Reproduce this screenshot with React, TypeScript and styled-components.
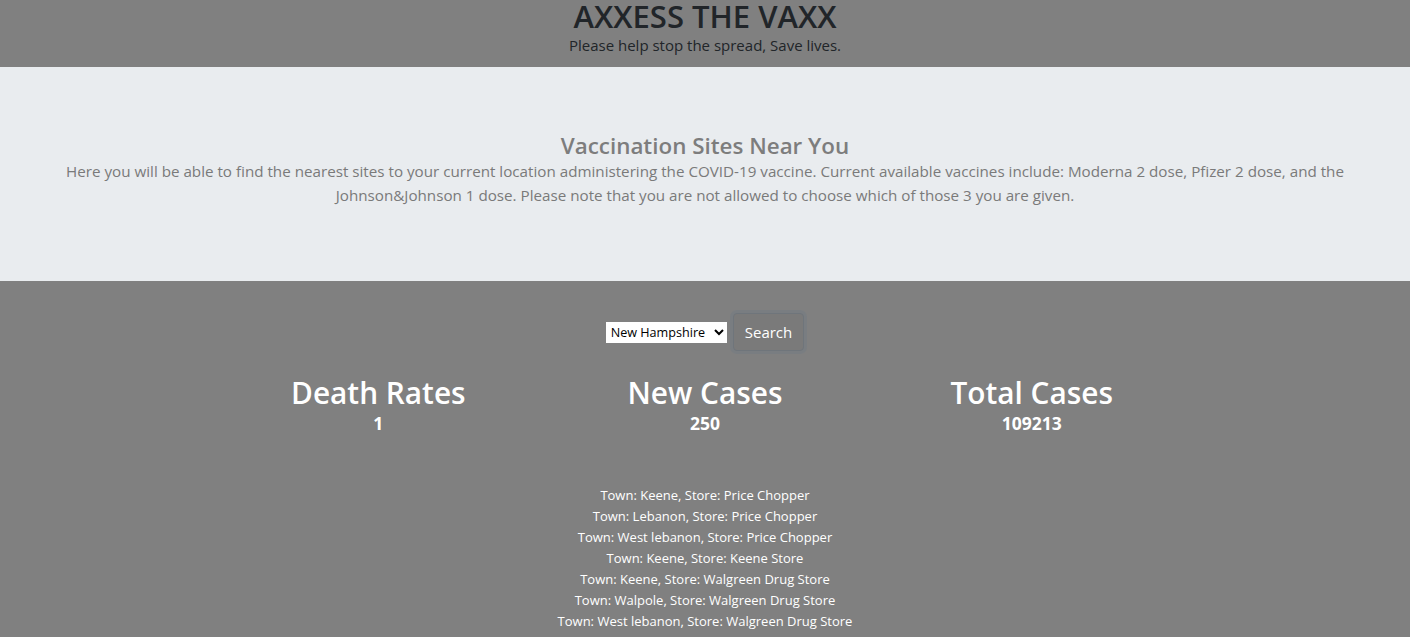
import React from "react";
import styled, { createGlobalStyle } from "styled-components";

const GlobalStyle = createGlobalStyle`
  html, body {
    margin: 0;
    padding: 0;
    background: #808080;
  }
  body {
    font-family: "Segoe UI", "Open Sans", "Noto Sans", sans-serif;
    font-size: 15px;
    line-height: 1.5;
    color: #212529;
  }
  * { box-sizing: border-box; }
`;

const Page = styled.div`
  width: 100%;
  min-height: 637px;
  background: #808080;
`;

const Header = styled.header`
  height: 67px;
  padding-top: 1px;
  display: flex;
  flex-direction: column;
  align-items: center;
  text-align: center;
  color: #212529;
`;

const SiteTitle = styled.h1`
  margin: 0;
  font-size: 31px;
  font-weight: 600;
  line-height: 30px;
`;

const Tagline = styled.p`
  margin: 3px 0 0;
  font-size: 15px;
  line-height: 22px;
`;

const Jumbotron = styled.section`
  height: 214px;
  background: #e9ecef;
  padding: 65px 57px 0;
  text-align: center;
  color: #7a7a7a;
`;

const JumboTitle = styled.h4`
  margin: 0;
  font-size: 22.4px;
  font-weight: 600;
  line-height: 28px;
  color: #7d7d7d;
`;

const JumboText = styled.p`
  margin: -1px auto 0;
  max-width: 1296px;
  font-size: 15.2px;
  line-height: 24px;
`;

const Main = styled.main`
  padding-top: 32px;
  display: flex;
  flex-direction: column;
  align-items: center;
`;

const SearchForm = styled.form`
  display: flex;
  align-items: center;
  gap: 6px;
  height: 38px;
`;

const StateSelect = styled.select`
  font-family: "Segoe UI", "Open Sans", sans-serif;
  font-size: 12.6px;
  width: 121px;
  height: 21px;
  padding: 0 1px;
  background: #fff;
  color: #000;
  border: none;
  border-radius: 0;
  outline: none;
`;

const SearchButton = styled.button`
  font-family: inherit;
  font-size: 15px;
  line-height: 24px;
  color: #fff;
  background: #7a7a7a;
  border: 1px solid #6f757b;
  border-radius: 4px;
  padding: 6px 11px;
  box-shadow: 0 0 0 3px rgba(118, 124, 130, 0.7);
  cursor: pointer;
`;

const Stats = styled.div`
  margin-top: 23px;
  width: 980px;
  display: grid;
  grid-template-columns: repeat(3, 1fr);
  text-align: center;
  color: #fff;
`;

const Stat = styled.div`
  display: flex;
  flex-direction: column;
  align-items: center;
`;

const StatLabel = styled.h2`
  margin: 0;
  font-size: 29.8px;
  font-weight: 600;
  line-height: 38px;
`;

const StatValue = styled.h5`
  margin: -1px 0 0;
  font-size: 17.5px;
  font-weight: 700;
  line-height: 24px;
`;

const SiteList = styled.ul`
  list-style: none;
  margin: 50px 0 0;
  padding: 0;
  text-align: center;
  color: #fff;
`;

const SiteItem = styled.li`
  font-size: 13px;
  line-height: 21px;
`;

const stats = [
  { label: "Death Rates", value: "1" },
  { label: "New Cases", value: "250" },
  { label: "Total Cases", value: "109213" },
];

const sites = [
  ["Keene", "Price Chopper"],
  ["Lebanon", "Price Chopper"],
  ["West lebanon", "Price Chopper"],
  ["Keene", "Keene Store"],
  ["Keene", "Walgreen Drug Store"],
  ["Walpole", "Walgreen Drug Store"],
  ["West lebanon", "Walgreen Drug Store"],
];

export default function App() {
  return (
    <Page>
      <GlobalStyle />
      <Header>
        <SiteTitle>AXXESS THE VAXX</SiteTitle>
        <Tagline>Please help stop the spread, Save lives.</Tagline>
      </Header>
      <Jumbotron>
        <JumboTitle>Vaccination Sites Near You</JumboTitle>
        <JumboText>
          Here you will be able to find the nearest sites to your current location
          administering the COVID-19 vaccine. Current available vaccines include:
          Moderna 2 dose, Pfizer 2 dose, and the Johnson&amp;Johnson 1 dose. Please
          note that you are not allowed to choose which of those 3 you are given.
        </JumboText>
      </Jumbotron>
      <Main>
        <SearchForm onSubmit={(e) => e.preventDefault()}>
          <StateSelect defaultValue="New Hampshire">
            <option>New Hampshire</option>
            <option>Vermont</option>
            <option>Maine</option>
            <option>Massachusetts</option>
          </StateSelect>
          <SearchButton type="submit">Search</SearchButton>
        </SearchForm>
        <Stats>
          {stats.map((s) => (
            <Stat key={s.label}>
              <StatLabel>{s.label}</StatLabel>
              <StatValue>{s.value}</StatValue>
            </Stat>
          ))}
        </Stats>
        <SiteList>
          {sites.map(([town, store], i) => (
            <SiteItem key={i}>
              Town: {town}, Store: {store}
            </SiteItem>
          ))}
        </SiteList>
      </Main>
    </Page>
  );
}
